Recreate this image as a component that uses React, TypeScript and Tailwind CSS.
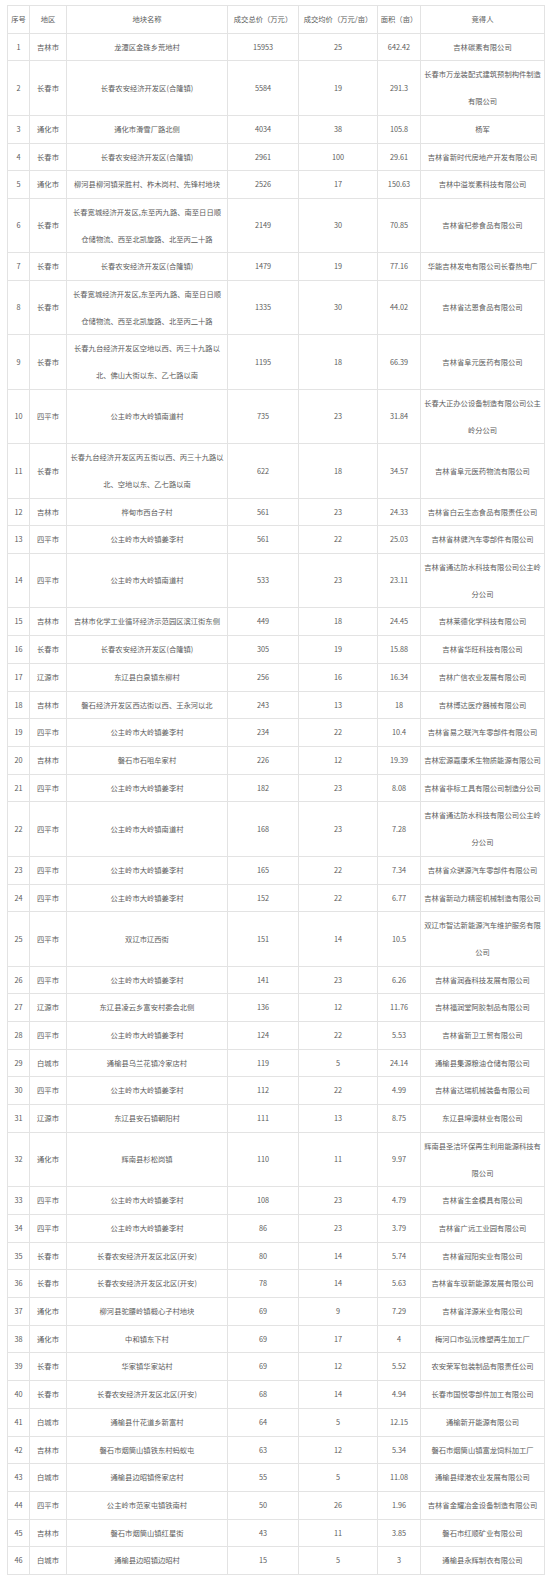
import React from "react";

type Row = [string, string, string[], string, string, string, string[]];

const rows: Row[] = [
  ["1", "吉林市", ["龙潭区金珠乡荒地村"], "15953", "25", "642.42", ["吉林碳素有限公司"]],
  ["2", "长春市", ["长春农安经济开发区(合隆镇)"], "5584", "19", "291.3", ["长春市万龙装配式建筑预制构件制造", "有限公司"]],
  ["3", "通化市", ["通化市滑雪厂路北侧"], "4034", "38", "105.8", ["杨军"]],
  ["4", "长春市", ["长春农安经济开发区(合隆镇)"], "2961", "100", "29.61", ["吉林省新时代房地产开发有限公司"]],
  ["5", "通化市", ["柳河县柳河镇采胜村、柞木岗村、先锋村地块"], "2526", "17", "150.63", ["吉林中溢炭素科技有限公司"]],
  ["6", "长春市", ["长春宽城经济开发区,东至丙九路、南至日日顺", "仓储物流、西至北凯旋路、北至丙二十路"], "2149", "30", "70.85", ["吉林省杞参食品有限公司"]],
  ["7", "长春市", ["长春农安经济开发区(合隆镇)"], "1479", "19", "77.16", ["华能吉林发电有限公司长春热电厂"]],
  ["8", "长春市", ["长春宽城经济开发区,东至丙九路、南至日日顺", "仓储物流、西至北凯旋路、北至丙二十路"], "1335", "30", "44.02", ["吉林省达恩食品有限公司"]],
  ["9", "长春市", ["长春九台经济开发区空地以西、丙三十九路以", "北、佛山大街以东、乙七路以南"], "1195", "18", "66.39", ["吉林省阜元医药有限公司"]],
  ["10", "四平市", ["公主岭市大岭镇南道村"], "735", "23", "31.84", ["长春大正办公设备制造有限公司公主", "岭分公司"]],
  ["11", "长春市", ["长春九台经济开发区丙五街以西、丙三十九路以", "北、空地以东、乙七路以南"], "622", "18", "34.57", ["吉林省阜元医药物流有限公司"]],
  ["12", "吉林市", ["桦甸市西台子村"], "561", "23", "24.33", ["吉林省白云生态食品有限责任公司"]],
  ["13", "四平市", ["公主岭市大岭镇姜李村"], "561", "22", "25.03", ["吉林省林健汽车零部件有限公司"]],
  ["14", "四平市", ["公主岭市大岭镇南道村"], "533", "23", "23.11", ["吉林省通达防水科技有限公司公主岭", "分公司"]],
  ["15", "吉林市", ["吉林市化学工业循环经济示范园区滨江街东侧"], "449", "18", "24.45", ["吉林莱德化学科技有限公司"]],
  ["16", "长春市", ["长春农安经济开发区(合隆镇)"], "305", "19", "15.88", ["吉林省华旺科技有限公司"]],
  ["17", "辽源市", ["东辽县白泉镇东柳村"], "256", "16", "16.34", ["吉林广信农业发展有限公司"]],
  ["18", "吉林市", ["磐石经济开发区西达街以西、王永河以北"], "243", "13", "18", ["吉林博达医疗器械有限公司"]],
  ["19", "四平市", ["公主岭市大岭镇姜李村"], "234", "22", "10.4", ["吉林省易之联汽车零部件有限公司"]],
  ["20", "吉林市", ["磐石市石咀牟家村"], "226", "12", "19.39", ["吉林宏源嘉康禾生物质能源有限公司"]],
  ["21", "四平市", ["公主岭市大岭镇姜李村"], "182", "23", "8.08", ["吉林省非标工具有限公司制造分公司"]],
  ["22", "四平市", ["公主岭市大岭镇南道村"], "168", "23", "7.28", ["吉林省通达防水科技有限公司公主岭", "分公司"]],
  ["23", "四平市", ["公主岭市大岭镇姜李村"], "165", "22", "7.34", ["吉林省众骐源汽车零部件有限公司"]],
  ["24", "四平市", ["公主岭市大岭镇姜李村"], "152", "22", "6.77", ["吉林省新动力精密机械制造有限公司"]],
  ["25", "四平市", ["双辽市辽西街"], "151", "14", "10.5", ["双辽市智达新能源汽车维护服务有限", "公司"]],
  ["26", "四平市", ["公主岭市大岭镇姜李村"], "141", "23", "6.26", ["吉林省润鑫科技发展有限公司"]],
  ["27", "辽源市", ["东辽县凌云乡富安村委会北侧"], "136", "12", "11.76", ["吉林福润堂阿胶制品有限公司"]],
  ["28", "四平市", ["公主岭市大岭镇姜李村"], "124", "22", "5.53", ["吉林省新卫工贸有限公司"]],
  ["29", "白城市", ["通榆县乌兰花镇冷家店村"], "119", "5", "24.14", ["通榆县集源粮油仓储有限公司"]],
  ["30", "四平市", ["公主岭市大岭镇姜李村"], "112", "22", "4.99", ["吉林省达瑞机械装备有限公司"]],
  ["31", "辽源市", ["东辽县安石镇朝阳村"], "111", "13", "8.75", ["东辽县坤澳林业有限公司"]],
  ["32", "通化市", ["辉南县杉松岗镇"], "110", "11", "9.97", ["辉南县圣洁环保再生利用能源科技有", "限公司"]],
  ["33", "四平市", ["公主岭市大岭镇姜李村"], "108", "23", "4.79", ["吉林省生金模具有限公司"]],
  ["34", "四平市", ["公主岭市大岭镇姜李村"], "86", "23", "3.79", ["吉林省广远工业园有限公司"]],
  ["35", "长春市", ["长春农安经济开发区北区(开安)"], "80", "14", "5.74", ["吉林省冠阳实业有限公司"]],
  ["36", "长春市", ["长春农安经济开发区北区(开安)"], "78", "14", "5.63", ["吉林省车驭新能源发展有限公司"]],
  ["37", "通化市", ["柳河县驼腰岭镇椴心子村地块"], "69", "9", "7.29", ["吉林省洋源米业有限公司"]],
  ["38", "通化市", ["中和镇东下村"], "69", "17", "4", ["梅河口市弘沅橡塑再生加工厂"]],
  ["39", "长春市", ["华家镇华家站村"], "69", "12", "5.52", ["农安荣军包装制品有限责任公司"]],
  ["40", "长春市", ["长春农安经济开发区北区(开安)"], "68", "14", "4.94", ["长春市国悦零部件加工有限公司"]],
  ["41", "白城市", ["通榆县什花道乡新富村"], "64", "5", "12.15", ["通榆新开能源有限公司"]],
  ["42", "吉林市", ["磐石市烟筒山镇铁东村蚂蚁屯"], "63", "12", "5.34", ["磐石市烟筒山镇富龙饲料加工厂"]],
  ["43", "白城市", ["通榆县边昭镇佟家店村"], "55", "5", "11.08", ["通榆县绿港农业发展有限公司"]],
  ["44", "四平市", ["公主岭市范家屯镇铁南村"], "50", "26", "1.96", ["吉林省金耀冶金设备制造有限公司"]],
  ["45", "吉林市", ["磐石市烟筒山镇红星街"], "43", "11", "3.85", ["磐石市红顺矿业有限公司"]],
  ["46", "白城市", ["通榆县边昭镇边昭村"], "15", "5", "3", ["通榆县永辉制衣有限公司"]],
];

const headers = ["序号", "地区", "地块名称", "成交总价（万元）", "成交均价（万元/亩）", "面积（亩）", "竞得人"];

const cell =
  "border border-[#e3e3e3] p-0 text-center align-middle whitespace-nowrap leading-[26.7px] overflow-hidden";

function Lines({ lines }: { lines: string[] }) {
  return (
    <>
      {lines.map((l, i) => (
        <div key={i}>{l}</div>
      ))}
    </>
  );
}

export default function App() {
  return (
    <div
      className="w-[550px] bg-white pt-[5px] pl-[7px] text-[7.3px] text-[#5c5c5c]"
      style={{ fontFamily: '"Noto Sans CJK SC", "Noto Sans", sans-serif' }}
    >
      <table className="table-fixed border-collapse w-[537px]">
        <colgroup>
          <col className="w-[22px]" />
          <col className="w-[37px]" />
          <col className="w-[161px]" />
          <col className="w-[71px]" />
          <col className="w-[79px]" />
          <col className="w-[43px]" />
          <col className="w-[124px]" />
        </colgroup>
        <thead>
          <tr>
            {headers.map((h) => (
              <th key={h} className={cell + " font-normal"}>
                {h}
              </th>
            ))}
          </tr>
        </thead>
        <tbody>
          {rows.map((r) => (
            <tr key={r[0]}>
              <td className={cell}>{r[0]}</td>
              <td className={cell}>{r[1]}</td>
              <td className={cell}>
                <Lines lines={r[2]} />
              </td>
              <td className={cell}>{r[3]}</td>
              <td className={cell}>{r[4]}</td>
              <td className={cell}>{r[5]}</td>
              <td className={cell}>
                <Lines lines={r[6]} />
              </td>
            </tr>
          ))}
        </tbody>
      </table>
    </div>
  );
}
